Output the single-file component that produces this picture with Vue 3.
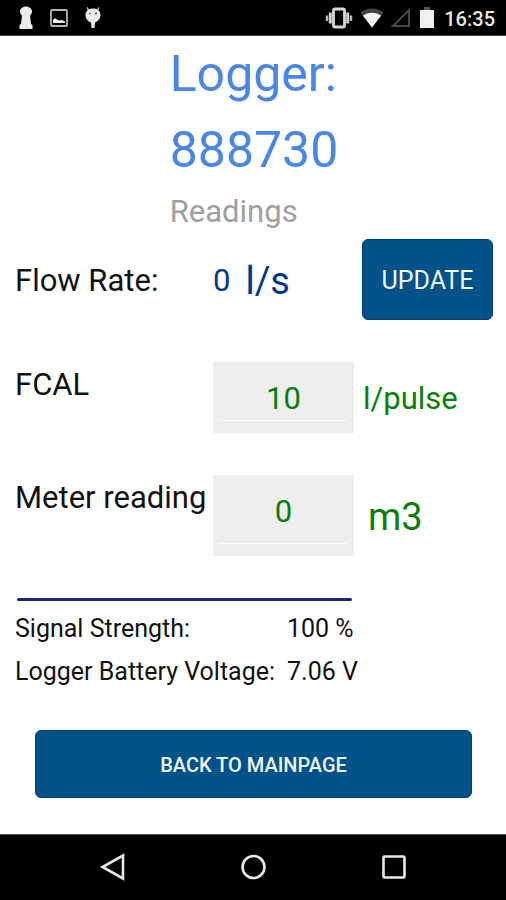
<script setup>
import { ref } from 'vue'

const fcal = ref('10')
const meter = ref('0')
</script>

<template>
  <div class="screen">
    <header class="status">
      <div class="status-group left">
        <svg width="16" height="24" viewBox="0 0 16 24" fill="#ececec">
          <path d="M8 .5c3.600 0 6 2.500 6 5 0 1.800-.8 3-2 4.200L13 18l1.500 1v4H1.500v-4L3 18l1-8.300C2.800 8.500 2 7.300 2 5.500 2 3 4.400.5 8 .5z" />
        </svg>
        <svg width="20" height="20" viewBox="0 0 20 20">
          <rect x="2" y="2" width="16" height="16" rx="1" fill="none" stroke="#b4b4b4" stroke-width="1.800" />
          <path d="M4 15v-3l2-2 2.500 2 1.500.5 3-.5 3 1.500V15z" fill="#f2f2f2" />
        </svg>
        <svg width="18" height="24" viewBox="0 0 18 24">
          <path d="M4.500 4 3 1.500M13.500 4 15 1.500" stroke="#aaa" stroke-width="1.500" />
          <path d="M9 2.500c4.500 0 7.500 2.500 7.500 6.500 0 3.500-2.500 6.500-5.500 7.500l-.5 5.500h-3L7 16.500C4 15.500 1.500 12.500 1.500 9 1.500 5 4.500 2.500 9 2.500z" fill="#ececec" />
          <circle cx="5.800" cy="7.500" r="1" fill="#777" />
          <circle cx="12" cy="7.500" r="1" fill="#333" />
        </svg>
      </div>
      <div class="status-group right">
        <svg width="28" height="22" viewBox="0 0 28 22">
          <rect x="8.500" y="2" width="11" height="18" rx="1.500" fill="none" stroke="#d8d8d8" stroke-width="2.800" />
          <path d="M5.300 5.500v11M22.700 5.500v11" stroke="#d0d0d0" stroke-width="3" />
          <path d="M2 8.500v5.500M26 8.500v5.500" stroke="#bbb" stroke-width="2.400" />
        </svg>
        <svg width="24" height="20" viewBox="0 0 24 20">
          <path d="M12 19.500.5 4.500C7-.8 17-.8 23.500 4.500z" fill="#444" />
          <path d="M12 19.500 3 7.800c5-4.200 13-4.200 18 0z" fill="#f4f4f4" />
        </svg>
        <svg width="20" height="20" viewBox="0 0 20 20">
          <path d="M18 2v16H2z" fill="none" stroke="#484848" stroke-width="2" />
        </svg>
        <svg class="battery" width="14" height="22" viewBox="0 0 14 22">
          <path d="M4 0h6v3H4z" fill="#555" />
          <path d="M0 3h14v18H0z" fill="#f0f0f0" />
        </svg>
        <time>16:35</time>
      </div>
    </header>

    <main>
      <div class="heading">
        <h1>Logger:<br />888730</h1>
        <p>Readings</p>
      </div>

      <section class="row flow">
        <span class="caption">Flow Rate:</span>
        <span class="rate"><span>0</span><span class="large">l/s</span></span>
        <button type="button" class="update">UPDATE</button>
      </section>

      <section class="row entry">
        <label for="fcal">FCAL</label>
        <span class="field"><input id="fcal" v-model="fcal" type="text" inputmode="numeric" /></span>
        <span class="unit">l/pulse</span>
      </section>

      <section class="row entry">
        <label for="meter">Meter reading</label>
        <span class="field tall"><input id="meter" v-model="meter" type="text" inputmode="numeric" /></span>
        <span class="unit large">m3</span>
      </section>

      <div class="row"><hr /></div>

      <dl>
        <dt>Signal Strength:</dt>
        <dd>100 %</dd>
        <dt>Logger Battery Voltage:</dt>
        <dd>7.06 V</dd>
      </dl>

      <button type="button" class="back">BACK TO MAINPAGE</button>
    </main>

    <nav>
      <button type="button" aria-label="Back">
        <svg width="28" height="28" viewBox="0 0 28 28"><path d="M25 2.500v23L4.500 14z" /></svg>
      </button>
      <button type="button" aria-label="Home">
        <svg width="28" height="28" viewBox="0 0 28 28"><circle cx="14.500" cy="14" r="11" /></svg>
      </button>
      <button type="button" aria-label="Recent apps">
        <svg width="28" height="28" viewBox="0 0 28 28"><rect x="3.500" y="3.500" width="21" height="21" rx="1" /></svg>
      </button>
    </nav>
  </div>
</template>

<style>
body {
  margin: 0;
  background: #fff;
}
</style>

<style scoped>
.screen {
  min-height: 100vh;
  display: flex;
  flex-direction: column;
  font-family: Roboto, sans-serif;
  font-size: 31px;
  color: #111;
}
.screen * {
  box-sizing: border-box;
}
.status {
  height: 36px;
  padding: 0 11px 0 18px;
  display: flex;
  justify-content: space-between;
  align-items: center;
  background: #000;
  border-bottom: 1px solid #444;
  color: #e8e8e8;
}
.status-group {
  display: flex;
  align-items: center;
}
.left {
  gap: 15px;
}
.right {
  gap: 7px;
}
.battery {
  margin: 0 3px 0 2px;
}
time {
  padding-top: 2px;
  font-size: 20px;
  font-weight: 500;
  line-height: 34px;
}
main {
  flex: 1;
  display: flex;
  flex-direction: column;
  padding: 0 13px 36px 15px;
}
.heading {
  align-self: center;
}
h1 {
  margin: 0;
  font-size: 50px;
  font-weight: 400;
  line-height: 76px;
  color: #4a86e8;
}
p {
  margin: 0;
  line-height: 48px;
  color: #a0a0a0;
}
.row {
  display: grid;
  grid-template-columns: 198fr 141fr 139fr;
  line-height: 46px;
}
.flow {
  align-items: center;
  margin-top: 3px;
}
.caption,
.rate {
  padding-top: 3px;
}
.rate {
  display: flex;
  align-items: center;
  gap: 15px;
  color: #00368c;
}
.large {
  font-size: 38px;
}
.update,
.back {
  border: 1px solid #00417c;
  border-radius: 6px;
  background: #005288;
  color: #f2f7fb;
  font-family: inherit;
}
.update {
  height: 81px;
  margin-left: 8px;
  padding: 2px 0 0;
  font-size: 25px;
}
.entry {
  margin-top: 42px;
}
.field {
  padding: 0 6px 12px;
  background: #eee;
}
input {
  display: block;
  width: 100%;
  height: 59px;
  padding: 14px 0 0;
  border: 0;
  border-bottom: 1px solid #fafafa;
  background: transparent;
  color: #087f08;
  font-family: inherit;
  font-size: 31px;
  text-align: center;
}
.tall input {
  height: 69px;
  padding-bottom: 10px;
}
.unit {
  align-self: center;
  padding: 3px 0 0 9px;
  color: #087f08;
}
.unit.large {
  padding-left: 14px;
}
hr {
  grid-column: 1 / 3;
  width: auto;
  height: 3px;
  margin: 42px 2px 0;
  border: 0;
  border-radius: 2px;
  background: #1a237e;
}
dl {
  display: grid;
  grid-template-columns: 272fr 206fr;
  margin: 6px 0 0;
  font-size: 25px;
  line-height: 43px;
}
dt {
  white-space: nowrap;
}
dd {
  margin: 0;
}
.back {
  height: 68px;
  margin: 37px 21px 0 20px;
  padding: 2px 0 0;
  font-size: 20px;
  font-weight: 500;
}
nav {
  height: 67px;
  padding-bottom: 2px;
  display: flex;
  justify-content: center;
  align-items: center;
  gap: 113px;
  background: #000;
  border-top: 1px solid #555;
}
nav button {
  display: flex;
  padding: 0;
  border: 0;
  background: none;
}
nav svg {
  fill: none;
  stroke: #e8e8e8;
  stroke-width: 2.600;
}
</style>
